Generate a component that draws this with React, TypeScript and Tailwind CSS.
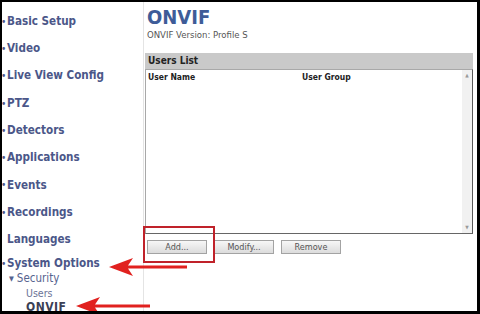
import React from "react";

const MENU = [
  { label: "Basic Setup", bullet: true },
  { label: "Video", bullet: true },
  { label: "Live View Config", bullet: true },
  { label: "PTZ", bullet: true },
  { label: "Detectors", bullet: true },
  { label: "Applications", bullet: true },
  { label: "Events", bullet: true },
  { label: "Recordings", bullet: true },
  { label: "Languages", bullet: false },
];

const FONT = { fontFamily: '"DejaVu Sans Condensed", "DejaVu Sans", Verdana, sans-serif' };

// red call-out arrow, tip on the left
const Arrow = ({ length }: { length: number }) => (
  <svg width={length} height="18" viewBox={`0 0 ${length} 18`}>
    <polygon
      points={`0,9 24,0 19,7.4 ${length},7.4 ${length},10.6 19,10.6 24,18`}
      fill="#e1211f"
    />
  </svg>
);

const Btn = ({ label }: { label: string }) => (
  <div className="w-[60px] h-[14px] flex items-center justify-center border border-[#a3a3a3] bg-gradient-to-b from-[#f7f7f7] to-[#dcdcdc] text-[9px] text-[#555] leading-none">
    {label}
  </div>
);

export default function App() {
  return (
    <div
      className="relative w-[480px] h-[314px] bg-white border-black border-t-2 border-l-2 border-r-[3px] border-b-[3px] flex overflow-hidden font-stretch-condensed"
      style={FONT}
    >
      {/* Sidebar */}
      <div className="w-[142px] shrink-0 border-r border-[#e4e4e4] flex flex-col pt-[6px]">
        {MENU.map((m) => (
          <div key={m.label} className="h-[27.3px] shrink-0 flex items-center">
            <span className="w-[6px] text-[10px] text-[#4b5789] leading-none -ml-[1px]">
              {m.bullet ? "•" : ""}
            </span>
            <span className="text-[11.6px] font-bold text-[#4b5789] leading-none">{m.label}</span>
          </div>
        ))}
        <div className="h-[14px] shrink-0 mt-[3px] flex items-center">
          <span className="w-[6px] text-[10px] text-[#4b5789] leading-none -ml-[1px]">•</span>
          <span className="text-[11.6px] font-bold text-[#4b5789] leading-none">System Options</span>
        </div>
        <div className="h-[14px] shrink-0 flex items-end pl-[7px]">
          <span className="text-[7px] text-[#56638f] leading-none mr-[3px] mb-[2px]">▼</span>
          <span className="text-[11.5px] text-[#56638f] leading-none">Security</span>
        </div>
        <div className="h-[14px] shrink-0 flex items-end pl-[24px]">
          <span className="text-[10.5px] text-[#6a7396] leading-none">Users</span>
        </div>
        <div className="h-[14px] shrink-0 flex items-end pl-[24px]">
          <span className="text-[12px] font-bold text-[#3b4055] leading-none tracking-[0.5px]">ONVIF</span>
        </div>
      </div>

      {/* Main */}
      <div className="flex-1 flex flex-col pt-[5px] pl-[3px] pr-[4px]">
        <div className="text-[20px] font-bold text-[#3e5c98] leading-[20px]">ONVIF</div>
        <div className="mt-[2px] h-[12px] flex items-center text-[9.5px] text-[#555] leading-none">
          ONVIF Version: Profile S
        </div>

        <div className="mt-[12px] -ml-[2px] flex flex-col">
          <div className="h-[16px] bg-[#c9c9c9] flex items-center pl-[3px] text-[10px] font-bold text-[#222] leading-none">
            Users List
          </div>
          <div className="h-[165px] border border-[#a8a8a8] border-r-[#585858] border-b-[#666] flex bg-white">
            <div className="flex-1 flex flex-col">
              <div className="h-[14px] flex items-center pl-[2px] text-[8.5px] font-bold text-[#222] leading-none">
                <span className="w-[154px]">User Name</span>
                <span>User Group</span>
              </div>
            </div>
            <div className="w-[10px] bg-[#f1f1f1] flex flex-col justify-between items-center py-[3px] text-[5px] text-[#999] leading-none">
              <span>▲</span>
              <span>▼</span>
            </div>
          </div>
        </div>

        <div className="mt-[6px] flex gap-[7px]">
          <Btn label="Add..." />
          <Btn label="Modify..." />
          <Btn label="Remove" />
        </div>
      </div>

      {/* Call-outs */}
      <div className="absolute left-[141px] top-[224px] w-[72px] h-[37px] border-2 border-[#c0222a]" />
      <div className="absolute left-[107px] top-[256px]">
        <Arrow length={78} />
      </div>
      <div className="absolute left-[74px] top-[295px]">
        <Arrow length={74} />
      </div>
    </div>
  );
}
